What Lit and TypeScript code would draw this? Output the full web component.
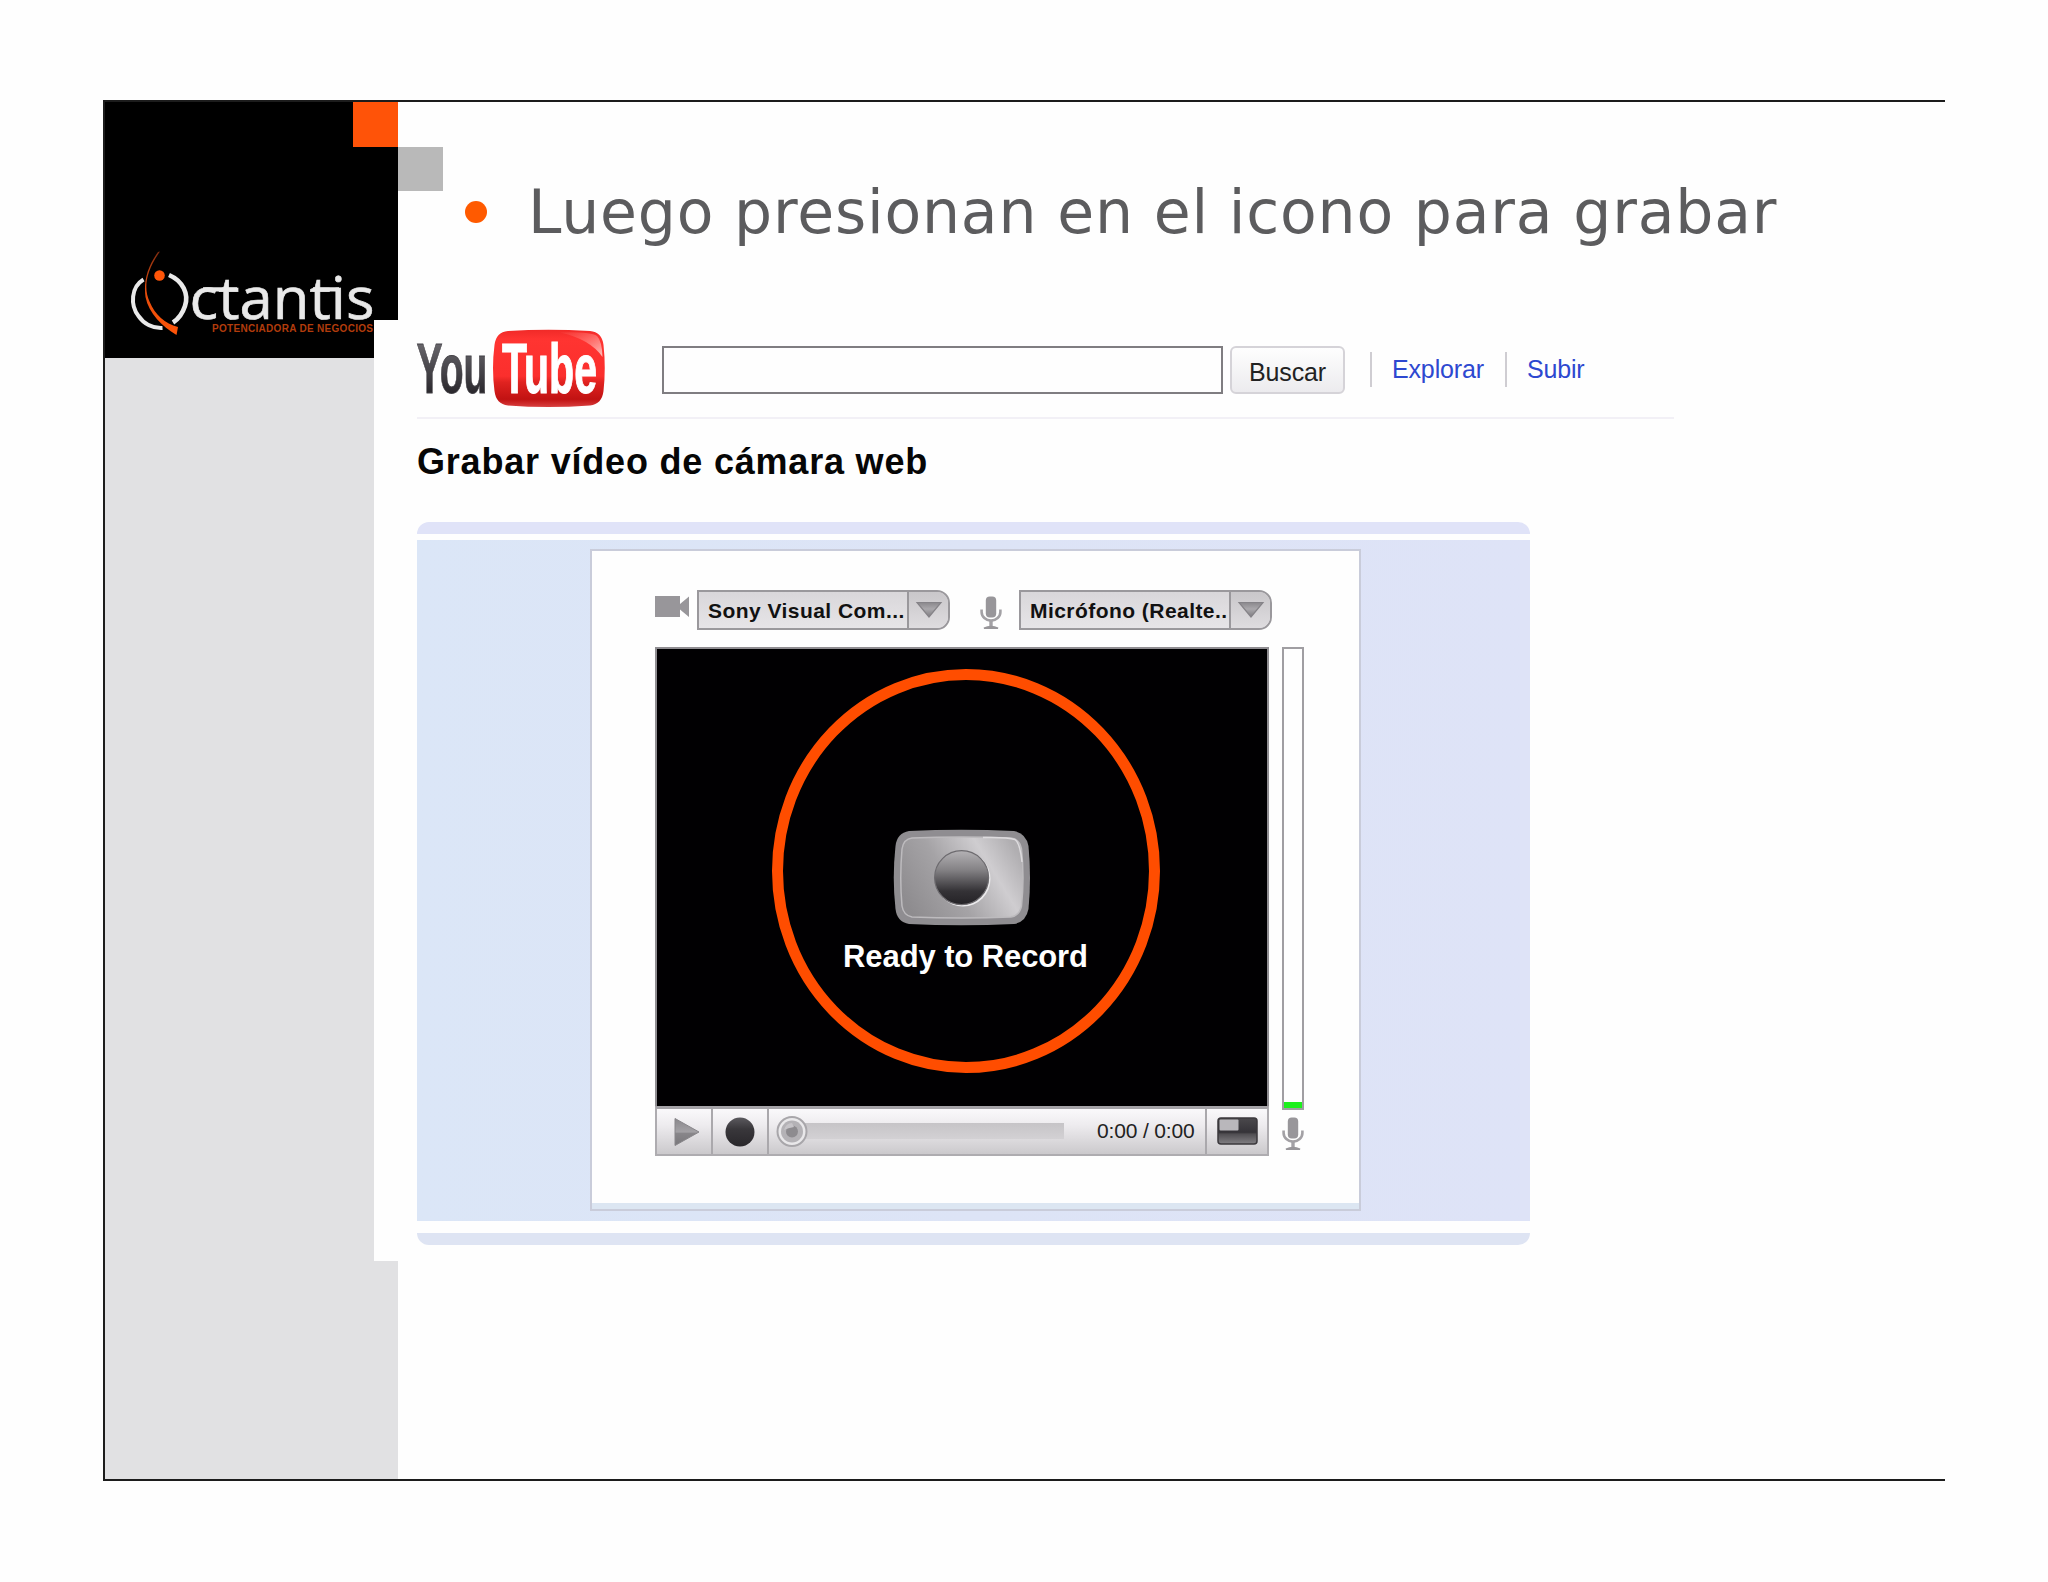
import { LitElement, html, css } from "lit";
import { customElement, property } from "lit/decorators.js";

@customElement("mic-icon")
class MicIcon extends LitElement {
  static styles = css`
    :host { display: block; width: 22px; height: 34px; }
    svg { display: block; }
  `;
  render() {
    return html`<svg width="22" height="34" viewBox="0 0 22 34">
      <rect x="5.8" y="0.5" width="10.4" height="21" rx="4" fill="#98969a" />
      <path d="M1.600 13.500v2.500a9.400 8.600 0 0 0 18.800 0v-2.500" fill="none" stroke="#a3a1a5" stroke-width="2.600" />
      <path d="M11 24.500v6" stroke="#a3a1a5" stroke-width="3.400" />
      <path d="M4 32.200q7-3.400 14 0z" fill="#98969a" stroke="#98969a" stroke-width="1.600" />
    </svg>`;
  }
}

@customElement("device-select")
class DeviceSelect extends LitElement {
  @property() label = "";
  static styles = css`
    :host {
      display: flex; box-sizing: border-box; width: 253px; height: 40px;
      border: 2px solid #9a989c; border-radius: 0 13px 13px 0; overflow: hidden;
      background: linear-gradient(#d9d7da, #e6e4e7);
      font: bold 21px/38px "Liberation Sans", Arial, sans-serif; color: #111;
    }
    .label { width: 208px; box-sizing: border-box; padding-left: 9px; white-space: nowrap; letter-spacing: .45px; }
    .arrow { flex: 1; border-left: 2px solid #9a989c; display: flex; align-items: center; justify-content: center; background: linear-gradient(#c9c7ca, #dedcdf); }
  `;
  render() {
    return html`<span class="label">${this.label}</span>
      <span class="arrow"><svg width="28" height="18" viewBox="0 0 28 18">
        <defs><linearGradient id="g" x2="0" y2="1"><stop stop-color="#8a888c" /><stop offset=".45" stop-color="#aaa8ac" /><stop offset="1" stop-color="#7d7b80" /></linearGradient></defs>
        <path d="M2 1.500h24L14 16z" fill="url(#g)" stroke="#858388" stroke-width="1.200" />
      </svg></span>`;
  }
}

const octantisLogo = html`<svg width="260" height="100" viewBox="118 242 260 100">
  <defs><linearGradient id="fig" x2="0" y2="1"><stop stop-color="#7d2c10" /><stop offset=".4" stop-color="#e04a0c" /><stop offset="1" stop-color="#ff5508" /></linearGradient></defs>
  <path d="M142.500 279.500C130 287 129 305 137.500 316C143 324 152 328.500 161.500 328" fill="none" stroke="#e9e9e9" stroke-width="4" />
  <path d="M168 275C182 281 188 294 184 306C181.500 313.500 177.500 319 172 322.500" fill="none" stroke="#e9e9e9" stroke-width="4.600" />
  <path d="M159 251.500C144.500 272 142.500 288 148.500 301.500C154 315 164 323.500 177 327L175.500 335C161 326 148 314 144.500 297C142.500 282 146 267 157 252z" fill="url(#fig)" />
  <circle cx="158.500" cy="275.500" r="5.300" fill="#ff5508" />
  <g font-family="'Open Sans', 'Noto Sans', sans-serif" font-size="59" fill="#e9e9e9" stroke="#e9e9e9" stroke-width=".6">
    <text x="188.500" y="319" textLength="185" lengthAdjust="spacingAndGlyphs">ctantis</text>
  </g>
  <path d="M202 289.300h34M312 289.300h26" stroke="#e9e9e9" stroke-width="4.200" />
  <text x="211" y="331.500" textLength="161" lengthAdjust="spacing" font-family="'Liberation Sans', sans-serif" font-weight="bold" font-size="10" fill="#b23c0c">POTENCIADORA DE NEGOCIOS</text>
</svg>`;

const youtubeLogo = html`<svg width="190" height="80" viewBox="416 329 190 80">
  <defs>
    <linearGradient id="you" x2="0" y2="1"><stop offset=".2" stop-color="#67656a" /><stop offset=".8" stop-color="#2c2a2f" /></linearGradient>
    <linearGradient id="red" x2="0" y2="1"><stop stop-color="#f02a28" /><stop offset=".12" stop-color="#ff3431" /><stop offset=".6" stop-color="#fb2f2d" /><stop offset=".68" stop-color="#e02320" /><stop offset=".9" stop-color="#c11212" /><stop offset="1" stop-color="#d84040" /></linearGradient>
    <linearGradient id="shine" x1="0" y1="0" x2="1" y2="1"><stop stop-color="#ff5a55" stop-opacity=".2" /><stop offset="1" stop-color="#ffc4c0" /></linearGradient>
  </defs>
  <path d="M508 331Q548 328.500 590 331Q602 332 603.500 345Q606 368 603.500 391Q602 404 590 405.500Q548 408.500 508 405.500Q496 404 494.500 391Q491.500 368 494.500 345Q496 332 508 331z" fill="url(#red)" />
  <path d="M560 332.500Q590 331.500 597 336Q602 341 602.500 357Q590 339 560 332.500z" fill="url(#shine)" />
  <g font-family="'Liberation Sans Narrow', 'Liberation Sans', sans-serif" font-weight="bold" font-size="71">
    <text x="416.500" y="392.500" fill="url(#you)" stroke="#454348" stroke-width=".8" textLength="71" lengthAdjust="spacingAndGlyphs">You</text>
    <text x="502" y="392.500" fill="#fff" stroke="#fff" stroke-width="1.200" textLength="95" lengthAdjust="spacingAndGlyphs">Tube</text>
  </g>
</svg>`;

const recordButton = html`<svg width="138" height="97" viewBox="893 829 138 97">
  <defs>
    <linearGradient id="face" x1="0" y1=".7" x2="1" y2=".3"><stop stop-color="#8e8c8f" /><stop offset=".4" stop-color="#a5a3a6" /><stop offset=".75" stop-color="#cfcdd0" /><stop offset="1" stop-color="#b0aeb1" /></linearGradient>
    <linearGradient id="dot" x2="0" y2="1"><stop stop-color="#b4b2b5" /><stop offset=".35" stop-color="#858386" /><stop offset=".75" stop-color="#343236" /><stop offset="1" stop-color="#242226" /></linearGradient>
  </defs>
  <path d="M909 831Q961 828.500 1014 831Q1026 833 1028.500 846Q1031.500 878 1028.500 909Q1026 922 1014 924Q961 926.500 909 924Q897 922 895.500 909Q892 878 895.500 846Q897 833 909 831z" fill="#8f8d91" />
  <path d="M912 838Q961 836 1011 838Q1019.500 839 1021.500 849Q1024.500 878 1021.500 906Q1019.500 915.500 1011 917Q961 919 912 917Q903.500 915.500 902 906Q899.500 878 902 849Q903.500 839 912 838z" fill="url(#face)" stroke="#bdbbbe" stroke-width="1.500" />
  <path d="M983 837.500Q1008 837 1015 839.500Q1020 843 1022 862" fill="none" stroke="#dddbde" stroke-width="1.500" />
  <circle cx="963" cy="879" r="27.500" fill="#ecebed" />
  <circle cx="961.600" cy="877.700" r="27" fill="url(#dot)" stroke="#6d6b6f" stroke-width="1.200" />
</svg>`;

@customElement("video-recorder")
class VideoRecorder extends LitElement {
  static styles = css`
    :host {
      display: block; box-sizing: border-box; width: 771px; height: 662px; padding: 39px 0 0 63px;
      background: #fefefe; border: 2px solid #c9ccda; position: relative;
      box-shadow: inset 0 -6px #dce6f2;
      font-family: "Liberation Sans", Arial, sans-serif;
    }
    svg { display: block; }
    .devices { display: flex; height: 40px; }
    .cam { margin: 6px 7px 0 0; }
    .mic { margin: 6px 17px 0 30px; }
    .body { display: flex; gap: 13px; margin-top: 17px; }
    .player { width: 614px; }
    .screen {
      box-sizing: border-box; height: 459px; background: #010002; border: 2px solid #8f8d91; border-bottom: 0;
      display: flex; flex-direction: column; align-items: center; padding-top: 180px;
    }
    .screen svg { margin-right: 1px; }
    .ready { color: #fff; font: bold 31px/36px "Liberation Sans", Arial, sans-serif; margin-top: 13px; white-space: nowrap; padding-left: 7px; letter-spacing: -.1px; }
    .controls {
      box-sizing: border-box; height: 50px; display: flex; border: 2px solid #aeacb0; border-top: 3px solid #a5a3a7;
      background: linear-gradient(#faf9fb, #eeecef 35%, #cbc9cc);
    }
    .cell { display: flex; align-items: center; justify-content: center; border-right: 2px solid #aaa8ac; box-sizing: border-box; }
    .play, .rec { width: 56px; }
    .play { padding-left: 5px; }
    .seek { width: 438px; justify-content: flex-start; }
    .time { font-size: 21px; color: #222; margin: -1px 0 0 31px; white-space: nowrap; letter-spacing: -.15px; }
    .pip { flex: 1; border: 0; padding-bottom: 2px; }
    .level { width: 22px; }
    .meter { box-sizing: border-box; height: 463px; border: 2px solid #a09ea2; display: flex; flex-direction: column; justify-content: flex-end; }
    .bar { height: 6px; background: #1df01d; }
    .level mic-icon { margin-top: 7px; }
    .ring { position: absolute; left: 180px; top: 118px; }
  `;
  render() {
    return html`
      <div class="devices">
        <svg class="cam" width="35" height="22" viewBox="0 0 35 22"><path d="M0 0h25v8l9-7.500v20.500l-9-7.500v7.500H0z" fill="#98969a" /></svg>
        <device-select label="Sony Visual Com..."></device-select>
        <mic-icon class="mic"></mic-icon>
        <device-select label="Micrófono (Realte.."></device-select>
      </div>
      <div class="body">
        <div class="player">
          <div class="screen">${recordButton}<div class="ready">Ready to Record</div></div>
          <div class="controls">
            <div class="cell play"><svg width="28" height="32" viewBox="0 0 28 32">
              <defs><linearGradient id="pl" x2="0" y2="1"><stop stop-color="#8a888c" /><stop offset=".5" stop-color="#a3a1a5" /><stop offset=".55" stop-color="#88868a" /><stop offset="1" stop-color="#79777b" /></linearGradient></defs>
              <path d="M2 2.500L26 16L2 29.500z" fill="url(#pl)" stroke="#88868a" /></svg></div>
            <div class="cell rec"><svg width="30" height="30" viewBox="0 0 30 30">
              <defs><linearGradient id="rc" x2="0" y2="1"><stop stop-color="#5b595e" /><stop offset=".4" stop-color="#39373b" /><stop offset="1" stop-color="#29272b" /></linearGradient></defs>
              <circle cx="15" cy="15" r="14.500" fill="url(#rc)" /></svg></div>
            <div class="cell seek">
              <svg width="297" height="32" viewBox="768 1115 297 32">
                <defs><linearGradient id="tr" x2="0" y2="1"><stop stop-color="#c6c4c7" /><stop offset="1" stop-color="#d3d1d4" /></linearGradient></defs>
                <rect x="790" y="1122" width="273" height="16" fill="url(#tr)" />
                <circle cx="791" cy="1130.500" r="14.500" fill="#e9e8ea" stroke="#a8a6aa" stroke-width="2" />
                <circle cx="791" cy="1130.500" r="11" fill="#b4b2b6" />
                <circle cx="791" cy="1130.500" r="6" fill="#8d8b8f" />
                <path d="M783 1129q2-7 8-7l2 4q-6 1-10 3z" fill="#c6c4c8" />
              </svg>
              <span class="time">0:00 / 0:00</span>
            </div>
            <div class="cell pip"><svg width="41" height="28" viewBox="0 0 41 28">
              <defs><linearGradient id="pp" x2="0" y2="1"><stop stop-color="#4a484c" /><stop offset=".55" stop-color="#353338" /><stop offset=".62" stop-color="#504e52" /><stop offset="1" stop-color="#828084" /></linearGradient></defs>
              <rect x="1" y="1" width="39" height="26" rx="3" fill="url(#pp)" stroke="#3b393d" stroke-width="1.500" />
              <rect x="2.500" y="2.500" width="19" height="11" rx="1" fill="#b9b7bb" /></svg></div>
          </div>
        </div>
        <div class="level">
          <div class="meter"><div class="bar"></div></div>
          <mic-icon></mic-icon>
        </div>
      </div>
      <svg class="ring" width="388" height="404" viewBox="0 0 388 404"><ellipse cx="194" cy="202" rx="188.500" ry="196.500" fill="none" stroke="#ff4d00" stroke-width="11" /></svg>
    `;
  }
}

@customElement("app-root")
class AppRoot extends LitElement {
  static styles = css`
    :host { display: block; box-sizing: border-box; width: 2048px; height: 1582px; padding: 100px 0 0 103px; background: #fefefe; overflow: hidden; font-family: "Liberation Sans", Arial, sans-serif; }
    svg { display: block; }
    .slide { display: flex; box-sizing: border-box; width: 1842px; height: 1381px; border: solid #1c1c1c; border-width: 2px 0 2px 2px; }
    .side { width: 293px; background: #e1e1e3; flex: none; }
    .brand { height: 256px; background: #000; display: flex; flex-direction: column; }
    .orange { width: 45px; height: 45px; background: #ff5308; align-self: flex-end; }
    .brand svg { margin: 95px 0 0 14px; }
    .main { flex: 1; min-width: 0; }
    .grey { width: 45px; height: 44px; background: #b9b9b9; margin-top: 45px; }
    .title { display: flex; align-items: center; height: 80px; margin: -19px 0 0 67px; color: #5c5c5e; }
    .bullet { width: 22px; height: 22px; border-radius: 50%; background: #ff5a00; margin-right: 41px; }
    .title h1 { margin: 0; font: 400 60px/80px "DejaVu Sans", Verdana, sans-serif; white-space: nowrap; letter-spacing: .82px; }
    .shot { box-sizing: border-box; width: 1400px; height: 941px; margin: 68px 0 0 -24px; background: #fefefe; padding: 9px 0 0 43px; position: relative; }
    .head { display: flex; height: 90px; box-sizing: border-box; border-bottom: 2px solid #f2f0f6; width: 1257px; }
    .head svg { margin-left: -1px; flex: none; }
    .search { box-sizing: border-box; flex: none; width: 561px; height: 48px; margin: 17px 7px 0 56px; border: 2px solid #7f7d81; background: #fefefe; }
    .btn { box-sizing: border-box; flex: none; width: 115px; height: 48px; margin-top: 17px; border: 2px solid #d5d3d8; border-radius: 6px; background: linear-gradient(#fefefe, #ecebee); font-size: 25px; line-height: 48px; text-align: center; color: #222; letter-spacing: -.1px; }
    .links { display: flex; margin: 23px 0 0 25px; height: 35px; }
    .links a { border-left: 2px solid #cfcdd2; padding: 0 21px 0 20px; font-size: 25px; line-height: 35px; color: #2d48d0; letter-spacing: -.15px; }
    h2 { margin: 22px 0 0; font-size: 36px; line-height: 42px; font-weight: bold; color: #060606; white-space: nowrap; letter-spacing: .8px; }
    .strip { width: 1113px; height: 12px; background: #e0e3f8; }
    .strip.top { border-radius: 12px 12px 0 0; margin-top: 39px; }
    .strip.bottom { border-radius: 0 0 12px 12px; margin-top: 12px; background: #dee4f3; }
    .panel { box-sizing: border-box; width: 1113px; height: 681px; margin-top: 6px; padding: 9px 0 0 173px; background: linear-gradient(90deg, #dbe6f7, #dde4f6 50%, #dee3f7); }
  `;
  render() {
    return html`
      <div class="slide">
        <div class="side"><div class="brand"><div class="orange"></div>${octantisLogo}</div></div>
        <div class="main">
          <div class="grey"></div>
          <div class="title"><span class="bullet"></span><h1>Luego presionan en el icono para grabar</h1></div>
          <div class="shot">
            <div class="head">
              ${youtubeLogo}
              <div class="search"></div>
              <div class="btn">Buscar</div>
              <div class="links"><a>Explorar</a><a>Subir</a></div>
            </div>
            <h2>Grabar vídeo de cámara web</h2>
            <div class="strip top"></div>
            <div class="panel"><video-recorder></video-recorder></div>
            <div class="strip bottom"></div>
          </div>
        </div>
      </div>
    `;
  }
}
